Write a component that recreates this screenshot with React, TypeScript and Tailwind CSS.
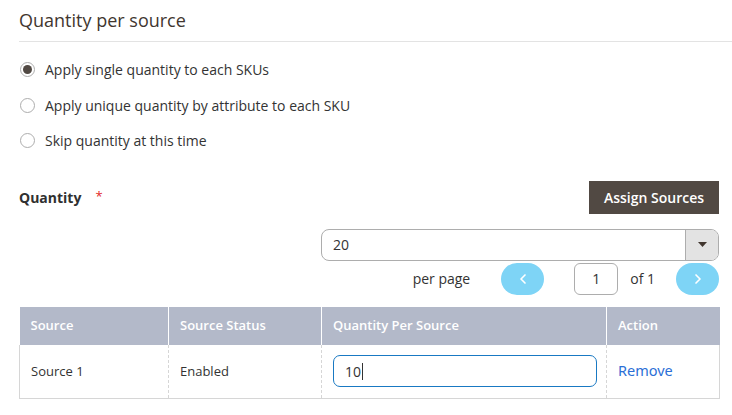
import { ChevronLeft, ChevronRight } from "lucide-react";

const font = { fontFamily: '"Open Sans", "Liberation Sans", sans-serif' };

const options = [
  { label: "Apply single quantity to each SKUs", checked: true },
  { label: "Apply unique quantity by attribute to each SKU", checked: false },
  { label: "Skip quantity at this time", checked: false },
];

const Radio = ({ checked }: { checked: boolean }) => (
  <span className="flex h-[15px] w-[15px] items-center justify-center rounded-full border border-[#adadad] bg-white">
    {checked && <span className="h-[9px] w-[9px] rounded-full bg-[#514943]" />}
  </span>
);

export default function App() {
  return (
    <div className="h-[415px] w-[732px] overflow-hidden bg-white pl-[19px] text-[#333]" style={font}>
      <div className="flex h-[42px] items-center border-b border-[#e3e3e3] pb-[2px]">
        <h2 className="text-[18px] font-normal leading-none text-[#41362f]">Quantity per source</h2>
      </div>

      <div className="pr-[13px]">
        <div className="mt-[10px] flex flex-col">
          {options.map((o) => (
            <label key={o.label} className="flex h-[35.5px] items-center gap-[10px] pl-[1px] text-[14px]">
              <Radio checked={o.checked} />
              <span>{o.label}</span>
            </label>
          ))}
        </div>

        <div className="mt-[22px] flex h-[33px] items-center justify-between">
          <div className="flex items-center text-[14px] font-bold text-[#303030]">
            <span>Quantity</span>
            <span className="ml-[14px] text-[13px] font-normal text-[#e22626]">*</span>
          </div>
          <button className="h-[33px] w-[130px] bg-[#514943] text-[14px] font-semibold text-white">
            Assign Sources
          </button>
        </div>

        <div className="ml-[302px] mt-[15px] flex h-[32px] overflow-hidden rounded-[8px] border border-[#adadad]">
          <span className="flex flex-1 items-center pl-[11px] text-[14px]">20</span>
          <span className="flex w-[33px] items-center justify-center border-l border-[#adadad] bg-[#e3e3e3]">
            <svg width="9" height="5" viewBox="0 0 9 5">
              <path d="M0 0h9L4.5 5z" fill="#41362f" />
            </svg>
          </span>
        </div>

        <div className="mt-[2px] flex h-[32px] items-center justify-end text-[14px]">
          <span>per page</span>
          <button className="ml-[31px] flex h-[32px] w-[43px] items-center justify-center rounded-full bg-[#7ed4f6] text-white">
            <ChevronLeft size={16} strokeWidth={2.5} />
          </button>
          <span className="ml-[30px] flex h-[32px] w-[44px] items-center justify-center rounded-[6px] border border-[#adadad]">
            1
          </span>
          <span className="ml-[12px]">of 1</span>
          <button className="ml-[21px] flex h-[32px] w-[43px] items-center justify-center rounded-full bg-[#7ed4f6] text-white">
            <ChevronRight size={16} strokeWidth={2.5} />
          </button>
        </div>

        <table className="mt-[12px] w-[700px] table-fixed border-collapse text-[13px]">
          <colgroup>
            <col className="w-[149px]" />
            <col className="w-[153px]" />
            <col className="w-[285px]" />
            <col className="w-[113px]" />
          </colgroup>
          <thead>
            <tr className="h-[38px] bg-[#b3b9c9] text-left font-semibold text-white">
              <th className="border-r border-white px-[11px] font-semibold">Source</th>
              <th className="border-r border-white px-[11px] font-semibold">Source Status</th>
              <th className="border-r border-white px-[11px] font-semibold">Quantity Per Source</th>
              <th className="px-[11px] font-semibold">Action</th>
            </tr>
          </thead>
          <tbody>
            <tr className="h-[54px] border-x border-b border-[#d6d6d6]">
              <td className="border-r border-dashed border-[#d6d6d6] px-[11px]">Source 1</td>
              <td className="border-r border-dashed border-[#d6d6d6] px-[11px]">Enabled</td>
              <td className="border-r border-dashed border-[#d6d6d6] px-[11px]">
                <div className="flex h-[32px] w-[264px] items-center rounded-[7px] border border-[#1979c3] pl-[11px] text-[14px]">
                  10<span className="ml-[1px] h-[17px] w-px bg-[#333]" />
                </div>
              </td>
              <td className="px-[11px] text-[14.5px] text-[#2b6fd6]" style={{ fontFamily: '"Noto Sans", sans-serif' }}>
                Remove
              </td>
            </tr>
          </tbody>
        </table>
      </div>
    </div>
  );
}
